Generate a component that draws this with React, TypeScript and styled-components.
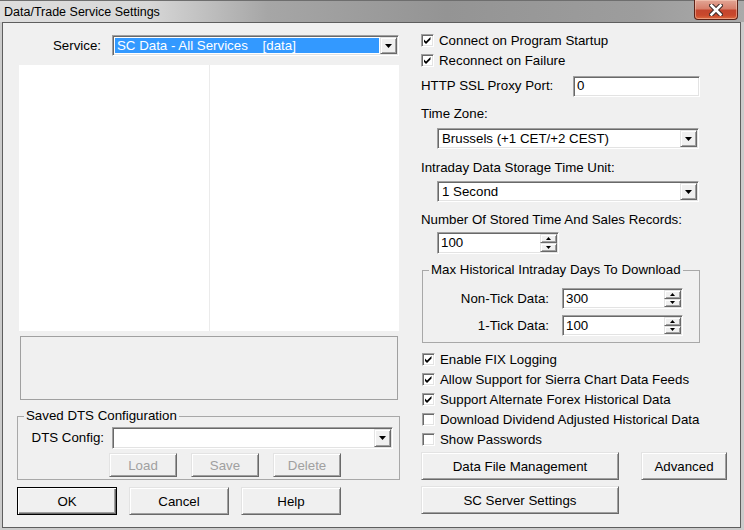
import React from 'react'
import styled, { createGlobalStyle, css } from 'styled-components'

const GlobalStyle = createGlobalStyle`
  html, body {
    margin: 0;
    padding: 0;
    background: #ffffff;
  }
  body {
    font-family: 'Liberation Sans', Arial, sans-serif;
    font-size: 13.3px;
    color: #000;
  }
  * {
    box-sizing: border-box;
  }
`

const sunken = css`
  border: 1px solid;
  border-color: #a0a0a0 #ffffff #ffffff #a0a0a0;
  box-shadow: inset 1px 1px #696969, inset -1px -1px #e3e3e3;
  background: #ffffff;
`

const raised = css`
  border: 1px solid;
  border-color: #e3e3e3 #696969 #696969 #e3e3e3;
  box-shadow: inset 1px 1px #ffffff, inset -1px -1px #a0a0a0;
  background: #f0f0f0;
`

const Window = styled.div`
  width: 744px;
  height: 530px;
  display: flex;
  flex-direction: column;
  background: #cbcbcb;
  overflow: hidden;
`

const TitleBar = styled.div`
  height: 22px;
  flex: none;
  display: flex;
  align-items: flex-start;
  padding-left: 4px;
  border-top: 1px solid #6e6e6e;
  background: linear-gradient(
    to right,
    #dedede 0%,
    #d7d7d7 20%,
    #a6a6a6 36%,
    #949494 60%,
    #9d9d9d 86%,
    #aaaaaa 100%
  );
`

const Title = styled.div`
  flex: 1;
  font-size: 12.5px;
  line-height: 20px;
  padding-top: 1px;
  color: #000;
`

const CloseButton = styled.div`
  width: 44px;
  height: 20px;
  margin-top: -1px;
  margin-right: 6px;
  display: flex;
  align-items: center;
  justify-content: center;
  border: 1px solid #5b2116;
  border-top: none;
  border-radius: 0 0 4px 4px;
  background: linear-gradient(to bottom, #e2a595 0%, #d7806c 45%, #c4452d 55%, #c9482c 80%, #dc6a3f 100%);
  box-shadow: inset 0 0 0 1px rgba(255, 220, 200, 0.45);
`

const Frame = styled.div`
  flex: 1;
  display: flex;
  padding: 0 3px 2px 2px;
`

const Client = styled.div`
  flex: 1;
  display: grid;
  grid-template-columns: 400px 1fr;
  border: 1px solid #5e5e5e;
  background: #f0f0f0;
`

const LeftColumn = styled.div`
  display: flex;
  flex-direction: column;
  align-items: flex-start;
  padding: 12px 0 0 14px;
`

const RightColumn = styled.div`
  display: flex;
  flex-direction: column;
  align-items: flex-start;
  padding: 7px 0 0 18px;
`

const Row = styled.div<{ $mt?: number; $ml?: number; $h?: number }>`
  display: flex;
  align-items: center;
  margin-top: ${(p) => p.$mt ?? 0}px;
  margin-left: ${(p) => p.$ml ?? 0}px;
  height: ${(p) => (p.$h ? `${p.$h}px` : 'auto')};
`

const Label = styled.span<{ $w?: number; $mr?: number; $right?: boolean }>`
  display: inline-block;
  line-height: 16px;
  white-space: nowrap;
  width: ${(p) => (p.$w ? `${p.$w}px` : 'auto')};
  margin-right: ${(p) => p.$mr ?? 0}px;
  text-align: ${(p) => (p.$right ? 'right' : 'left')};
`

const Caption = styled.div<{ $mt: number }>`
  line-height: 16px;
  margin-top: ${(p) => p.$mt}px;
  white-space: nowrap;
`

const ComboBox = styled.div<{ $w: number; $h: number; $mt?: number; $ml?: number }>`
  ${sunken};
  width: ${(p) => p.$w}px;
  height: ${(p) => p.$h}px;
  margin-top: ${(p) => p.$mt ?? 0}px;
  margin-left: ${(p) => p.$ml ?? 0}px;
  padding: 1px;
  display: flex;
  align-items: stretch;
`

const ComboText = styled.div<{ $selected?: boolean }>`
  flex: 1;
  display: flex;
  align-items: center;
  padding-left: 2px;
  margin: 1px;
  white-space: pre;
  line-height: 16px;
  background: ${(p) => (p.$selected ? '#3399ff' : 'transparent')};
  color: ${(p) => (p.$selected ? '#ffffff' : '#000000')};
`

const DropButton = styled.div`
  ${raised};
  width: 17px;
  flex: none;
  display: flex;
  align-items: center;
  justify-content: center;
`

const Edit = styled.div<{ $w: number; $h: number }>`
  ${sunken};
  width: ${(p) => p.$w}px;
  height: ${(p) => p.$h}px;
  padding: 1px 1px 1px 3px;
  display: flex;
  align-items: stretch;
`

const EditText = styled.div`
  flex: 1;
  display: flex;
  align-items: center;
  line-height: 16px;
`

const SpinColumn = styled.div`
  width: 17px;
  flex: none;
  display: flex;
  flex-direction: column;
`

const SpinButton = styled.div`
  ${raised};
  flex: 1;
  display: flex;
  align-items: center;
  justify-content: center;
`

const ListPanel = styled.div`
  margin: 9px 0 0 2px;
  width: 380px;
  height: 266px;
  display: flex;
  gap: 1px;
  background: #ebebeb;
`

const ListPane = styled.div<{ $w?: number }>`
  background: #ffffff;
  flex: ${(p) => (p.$w ? `0 0 ${p.$w}px` : '1')};
`

const StatusBox = styled.div`
  margin: 5px 0 0 3px;
  width: 378px;
  height: 64px;
  border: 1px solid #a0a0a0;
  background: #f0f0f0;
`

const GroupBox = styled.fieldset<{ $w: number; $mt: number; $ml?: number; $pb: number }>`
  margin: ${(p) => p.$mt}px 0 0 ${(p) => p.$ml ?? 0}px;
  padding: 0 0 ${(p) => p.$pb}px 0;
  width: ${(p) => p.$w}px;
  min-inline-size: 0;
  border: 1px solid #a8a8a8;
`

const GroupTitle = styled.legend`
  margin-left: 6px;
  padding: 0 2px;
  line-height: 14px;
  font-size: 13.3px;
  white-space: nowrap;
`

const ButtonRow = styled.div<{ $mt: number; $pl?: number; $gap: number }>`
  display: flex;
  margin-top: ${(p) => p.$mt}px;
  padding-left: ${(p) => p.$pl ?? 0}px;
  gap: ${(p) => p.$gap}px;
`

const PushButton = styled.button<{ $w: number; $h: number; $default?: boolean }>`
  ${raised};
  width: ${(p) => p.$w}px;
  height: ${(p) => p.$h}px;
  padding: 0;
  font-family: 'Liberation Sans', Arial, sans-serif;
  font-size: 13.3px;
  color: #000;
  cursor: default;
  &:disabled {
    color: #a0a0a0;
  }
  ${(p) =>
    p.$default &&
    css`
      border: 1px solid #000;
      box-shadow: inset 1px 1px #ffffff, inset -1px -1px #696969, inset -2px -2px #a0a0a0;
    `}
`

const CheckRow = styled.div<{ $mt?: number; $ml?: number }>`
  display: flex;
  align-items: center;
  height: 20px;
  margin-top: ${(p) => p.$mt ?? 0}px;
  margin-left: ${(p) => p.$ml ?? 0}px;
  white-space: nowrap;
`

const CheckBox = styled.span`
  ${sunken};
  width: 13px;
  height: 13px;
  margin-right: 5px;
  flex: none;
  display: flex;
`

const DownArrow = ({ w = 7, h = 4 }: { w?: number; h?: number }) => (
  <svg width={w} height={h} viewBox={`0 0 ${w} ${h}`}>
    <polygon points={`0,0 ${w},0 ${w / 2},${h}`} fill="#000" />
  </svg>
)

const UpArrow = ({ w = 5, h = 3 }: { w?: number; h?: number }) => (
  <svg width={w} height={h} viewBox={`0 0 ${w} ${h}`}>
    <polygon points={`0,${h} ${w},${h} ${w / 2},0`} fill="#000" />
  </svg>
)

const Check = ({ label, checked, mt, ml }: { label: string; checked: boolean; mt?: number; ml?: number }) => (
  <CheckRow $mt={mt} $ml={ml}>
    <CheckBox>
      {checked && (
        <svg width="11" height="11" viewBox="0 0 11 11">
          <polygon points="2,4.5 4,6.5 8.5,2 8.5,4.5 4,9 2,7" fill="#000" />
        </svg>
      )}
    </CheckBox>
    <span>{label}</span>
  </CheckRow>
)

const Combo = ({
  w,
  h,
  text,
  selected,
  mt,
  ml,
}: {
  w: number
  h: number
  text: string
  selected?: boolean
  mt?: number
  ml?: number
}) => (
  <ComboBox $w={w} $h={h} $mt={mt} $ml={ml}>
    <ComboText $selected={selected}>{text}</ComboText>
    <DropButton>
      <DownArrow />
    </DropButton>
  </ComboBox>
)

const Spin = ({ w, h, value }: { w: number; h: number; value: string }) => (
  <Edit $w={w} $h={h}>
    <EditText>{value}</EditText>
    <SpinColumn>
      <SpinButton>
        <UpArrow />
      </SpinButton>
      <SpinButton>
        <DownArrow w={5} h={3} />
      </SpinButton>
    </SpinColumn>
  </Edit>
)

const App = () => {
  return (
    <>
      <GlobalStyle />
      <Window>
        <TitleBar>
          <Title>Data/Trade Service Settings</Title>
          <CloseButton>
            <svg width="14" height="12" viewBox="0 0 14 12">
              <path d="M2.5 1.5 L11.5 10.5 M11.5 1.5 L2.5 10.5" stroke="#3b2a26" strokeWidth="4.6" strokeLinecap="square" />
              <path d="M2.5 1.5 L11.5 10.5 M11.5 1.5 L2.5 10.5" stroke="#ffffff" strokeWidth="2.6" strokeLinecap="square" />
            </svg>
          </CloseButton>
        </TitleBar>
        <Frame>
          <Client>
            <LeftColumn>
              <Row $h={21}>
                <Label $w={84} $mr={11} $right>
                  Service:
                </Label>
                <Combo w={287} h={21} text="SC Data - All Services    [data]" selected />
              </Row>
              <ListPanel>
                <ListPane $w={190} />
                <ListPane />
              </ListPanel>
              <StatusBox />
              <GroupBox $w={383} $mt={9} $pb={2}>
                <GroupTitle>Saved DTS Configuration</GroupTitle>
                <Row $mt={4} $h={22}>
                  <Label $w={86} $mr={8} $right>
                    DTS Config:
                  </Label>
                  <Combo w={281} h={22} text="" />
                </Row>
                <ButtonRow $mt={4} $pl={91} $gap={14}>
                  <PushButton $w={68} $h={24} disabled>
                    Load
                  </PushButton>
                  <PushButton $w={68} $h={24} disabled>
                    Save
                  </PushButton>
                  <PushButton $w={68} $h={24} disabled>
                    Delete
                  </PushButton>
                </ButtonRow>
              </GroupBox>
              <ButtonRow $mt={7} $gap={12}>
                <PushButton $w={100} $h={28} $default>
                  OK
                </PushButton>
                <PushButton $w={100} $h={28}>
                  Cancel
                </PushButton>
                <PushButton $w={100} $h={28}>
                  Help
                </PushButton>
              </ButtonRow>
            </LeftColumn>

            <RightColumn>
              <Check label="Connect on Program Startup" checked />
              <Check label="Reconnect on Failure" checked />
              <Row $mt={6} $h={20}>
                <Label $w={152}>HTTP SSL Proxy Port:</Label>
                <Edit $w={127} $h={21}>
                  <EditText>0</EditText>
                </Edit>
              </Row>
              <Caption $mt={10}>Time Zone:</Caption>
              <Combo w={262} h={21} mt={6} ml={16} text="Brussels (+1 CET/+2 CEST)" />
              <Caption $mt={11}>Intraday Data Storage Time Unit:</Caption>
              <Combo w={262} h={21} mt={5} ml={16} text="1 Second" />
              <Caption $mt={10}>Number Of Stored Time And Sales Records:</Caption>
              <Row $mt={4} $ml={16}>
                <Spin w={122} h={22} value="100" />
              </Row>
              <GroupBox $w={278} $mt={9} $ml={1} $pb={6}>
                <GroupTitle>Max Historical Intraday Days To Download</GroupTitle>
                <Row $mt={11}>
                  <Label $w={126} $mr={13} $right>
                    Non-Tick Data:
                  </Label>
                  <Spin w={121} h={21} value="300" />
                </Row>
                <Row $mt={6}>
                  <Label $w={126} $mr={13} $right>
                    1-Tick Data:
                  </Label>
                  <Spin w={121} h={21} value="100" />
                </Row>
              </GroupBox>
              <Check label="Enable FIX Logging" checked mt={6} ml={1} />
              <Check label="Allow Support for Sierra Chart Data Feeds" checked ml={1} />
              <Check label="Support Alternate Forex Historical Data" checked ml={1} />
              <Check label="Download Dividend Adjusted Historical Data" checked={false} ml={1} />
              <Check label="Show Passwords" checked={false} ml={1} />
              <ButtonRow $mt={3} $gap={22}>
                <PushButton $w={198} $h={28}>
                  Data File Management
                </PushButton>
                <PushButton $w={86} $h={28}>
                  Advanced
                </PushButton>
              </ButtonRow>
              <ButtonRow $mt={6} $gap={0}>
                <PushButton $w={198} $h={28}>
                  SC Server Settings
                </PushButton>
              </ButtonRow>
            </RightColumn>
          </Client>
        </Frame>
      </Window>
    </>
  )
}

export default App
